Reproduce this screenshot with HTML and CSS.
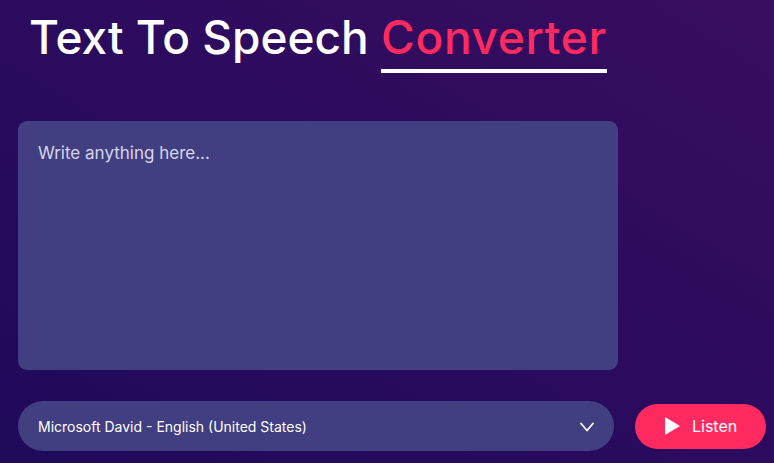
FILE: index.html
```html
<!DOCTYPE html>
<html lang="en">
<head>
<meta charset="utf-8">
<title>Text To Speech Converter</title>
<link rel="stylesheet" href="styles.css">
</head>
<body>
<main class="app">
  <h1 class="title">Text To Speech <span class="accent">Converter</span></h1>
  <textarea class="input" placeholder="Write anything here..."></textarea>
  <div class="controls">
    <div class="select-wrap">
      <select class="voice">
        <option>Microsoft David - English (United States)</option>
      </select>
      <svg class="chevron" width="14" height="10" viewBox="0 0 14 10"><path d="M1 1.5 L7 8.5 L13 1.5" fill="none" stroke="#fff" stroke-width="1.8" stroke-linecap="round" stroke-linejoin="round"/></svg>
    </div>
    <button class="listen" type="button">
      <svg class="play" width="15" height="18" viewBox="0 0 15 18"><path d="M0 0 L15 9 L0 18 Z" fill="#fff"/></svg>
      <span>Listen</span>
    </button>
  </div>
</main>
</body>
</html>
```
FILE: styles.css
```css
* { box-sizing: border-box; }
html, body { height: 100%; }
body {
  margin: 0;
  font-family: Inter, "Liberation Sans", sans-serif;
  background: linear-gradient(to top right, #1f0a5a 0%, #2b0b5e 50%, #390d60 100%);
  overflow: hidden;
}
.app {
  width: 774px;
  height: 463px;
  padding: 0 0 0 18px;
}
.title {
  margin: 0 0 0 11px;
  padding-top: 9px;
  font-size: 46px;
  font-weight: 500;
  line-height: 56px;
  color: #fff;
  letter-spacing: 0;
  white-space: nowrap;
}
.accent {
  color: #ff2a5f;
  letter-spacing: 0.7px;
  text-decoration: underline;
  text-decoration-color: #fff;
  text-decoration-thickness: 4px;
  text-underline-offset: 15px;
}
.input {
  display: block;
  margin-top: 56px;
  width: 600px;
  height: 249px;
  border: none;
  outline: none;
  resize: none;
  border-radius: 9px;
  background: #413e82;
  padding: 20px;
  font-family: inherit;
  font-size: 17px;
  line-height: 1.5;
  color: #fff;
}
.input::placeholder { color: #d6d6ec; opacity: 1; }
.controls {
  display: flex;
  align-items: center;
  gap: 21px;
  margin-top: 31px;
}
.select-wrap {
  position: relative;
  width: 596px;
  height: 50px;
}
.voice {
  appearance: none;
  -webkit-appearance: none;
  width: 100%;
  height: 100%;
  border: none;
  outline: none;
  border-radius: 25px;
  background: #413e82;
  color: #fff;
  font-family: inherit;
  font-size: 14px;
  padding: 0 50px 0 20px;
}
.chevron {
  position: absolute;
  right: 20px;
  top: 21px;
}
.listen {
  display: flex;
  align-items: center;
  gap: 12px;
  width: 131px;
  height: 45px;
  border: none;
  border-radius: 23px;
  background: #ff2a5f;
  color: #fff;
  font-family: inherit;
  font-size: 16px;
  padding: 0 0 0 30px;
}
```
